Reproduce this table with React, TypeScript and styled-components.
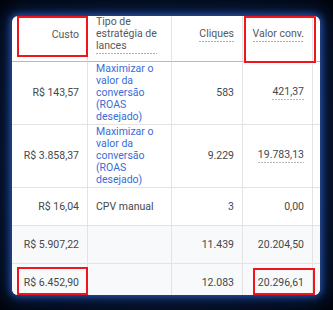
import React from "react";
import styled, { createGlobalStyle } from "styled-components";

const GlobalStyle = createGlobalStyle`
  html, body { margin: 0; padding: 0; background: #01040b; }
  body { font-family: Roboto, "Noto Sans", Arial, sans-serif; }
`;

const Stage = styled.div`
  width: 333px;
  height: 310px;
  box-sizing: border-box;
  padding: 16px 13px 15px 12px;
  background: radial-gradient(ellipse at center, #0a1a3a 0%, #050c1c 60%, #01040b 100%);
  overflow: hidden;
`;

const Card = styled.div`
  position: relative;
  width: 308px;
  height: 279px;
  background: #ffffff;
  border-radius: 6px;
  overflow: hidden;
  box-shadow: 0 0 6px 2px rgba(60, 120, 230, 0.55), 0 0 18px 6px rgba(25, 70, 170, 0.45);
`;

const Table = styled.div`
  display: grid;
  grid-template-columns: 76px 84px 71px 70px 1fr;
`;

const HeaderCell = styled.div<{ $align: "left" | "right" }>`
  box-sizing: border-box;
  height: 46px;
  padding: 0 8px 8px;
  display: flex;
  align-items: center;
  justify-content: ${(p) => (p.$align === "right" ? "flex-end" : "flex-start")};
  text-align: ${(p) => p.$align};
  border-right: 1px solid #e3e3e3;
  border-bottom: 1px solid #b8b8b8;
  color: #55585c;
  font-size: 10.5px;
  line-height: 12px;
`;

const Dotted = styled.span<{ $tone: "blue" | "gray" }>`
  display: inline-block;
  padding-bottom: 2px;
  background-image: linear-gradient(
    to right,
    ${(p) => (p.$tone === "blue" ? "#8ab4f8" : "#b8b8b8")} 65%,
    transparent 0
  );
  background-position: left bottom;
  background-size: 3px 1px;
  background-repeat: repeat-x;
`;

const Cell = styled.div<{ $align: "left" | "right"; $total?: boolean; $link?: boolean }>`
  box-sizing: border-box;
  min-height: 38px;
  padding: 1px 8px;
  display: flex;
  align-items: center;
  justify-content: ${(p) => (p.$align === "right" ? "flex-end" : "flex-start")};
  text-align: ${(p) => p.$align};
  border-right: 1px solid #e3e3e3;
  border-bottom: 1px solid #e3e3e3;
  background: ${(p) => (p.$total ? "#f8f9fa" : "#ffffff")};
  color: ${(p) => (p.$link ? "#3a6bd7" : "#44474b")};
  font-size: 10.5px;
  line-height: 12px;
`;

const Highlight = styled.div<{ $left: number; $top: number; $w: number; $h: number }>`
  position: absolute;
  left: ${(p) => p.$left}px;
  top: ${(p) => p.$top}px;
  width: ${(p) => p.$w}px;
  height: ${(p) => p.$h}px;
  box-sizing: border-box;
  border: 2px solid #f0141c;
  pointer-events: none;
`;

type Row = {
  custo: string;
  tipo: string;
  link?: boolean;
  cliques: string;
  valor: string;
  dotted?: boolean;
  total?: boolean;
};

const ROAS = "Maximizar o valor da conversão (ROAS desejado)";

const rows: Row[] = [
  { custo: "R$ 143,57", tipo: ROAS, link: true, cliques: "583", valor: "421,37", dotted: true },
  { custo: "R$ 3.858,37", tipo: ROAS, link: true, cliques: "9.229", valor: "19.783,13", dotted: true },
  { custo: "R$ 16,04", tipo: "CPV manual", cliques: "3", valor: "0,00" },
  { custo: "R$ 5.907,22", tipo: "", cliques: "11.439", valor: "20.204,50", total: true },
  { custo: "R$ 6.452,90", tipo: "", cliques: "12.083", valor: "20.296,61", total: true },
];

export default function App() {
  return (
    <>
      <GlobalStyle />
      <Stage>
        <Card>
          <Table>
            <HeaderCell $align="right">Custo</HeaderCell>
            <HeaderCell $align="left">
              <Dotted $tone="blue">
                Tipo de
                <br />
                estratégia de
                <br />
                lances
              </Dotted>
            </HeaderCell>
            <HeaderCell $align="right">
              <Dotted $tone="blue">Cliques</Dotted>
            </HeaderCell>
            <HeaderCell $align="right">
              <Dotted $tone="blue">Valor conv.</Dotted>
            </HeaderCell>
            <HeaderCell $align="left" />
            {rows.map((r, i) => (
              <React.Fragment key={i}>
                <Cell $align="right" $total={r.total}>{r.custo}</Cell>
                <Cell $align="left" $total={r.total} $link={r.link}>{r.tipo}</Cell>
                <Cell $align="right" $total={r.total}>{r.cliques}</Cell>
                <Cell $align="right" $total={r.total}>
                  {r.dotted ? <Dotted $tone="gray">{r.valor}</Dotted> : r.valor}
                </Cell>
                <Cell $align="left" $total={r.total} />
              </React.Fragment>
            ))}
          </Table>
          <Highlight $left={5} $top={0} $w={71} $h={41} />
          <Highlight $left={232} $top={0} $w={72} $h={47} />
          <Highlight $left={5} $top={251} $w={71} $h={28} />
          <Highlight $left={241} $top={252} $w={62} $h={27} />
        </Card>
      </Stage>
    </>
  );
}
